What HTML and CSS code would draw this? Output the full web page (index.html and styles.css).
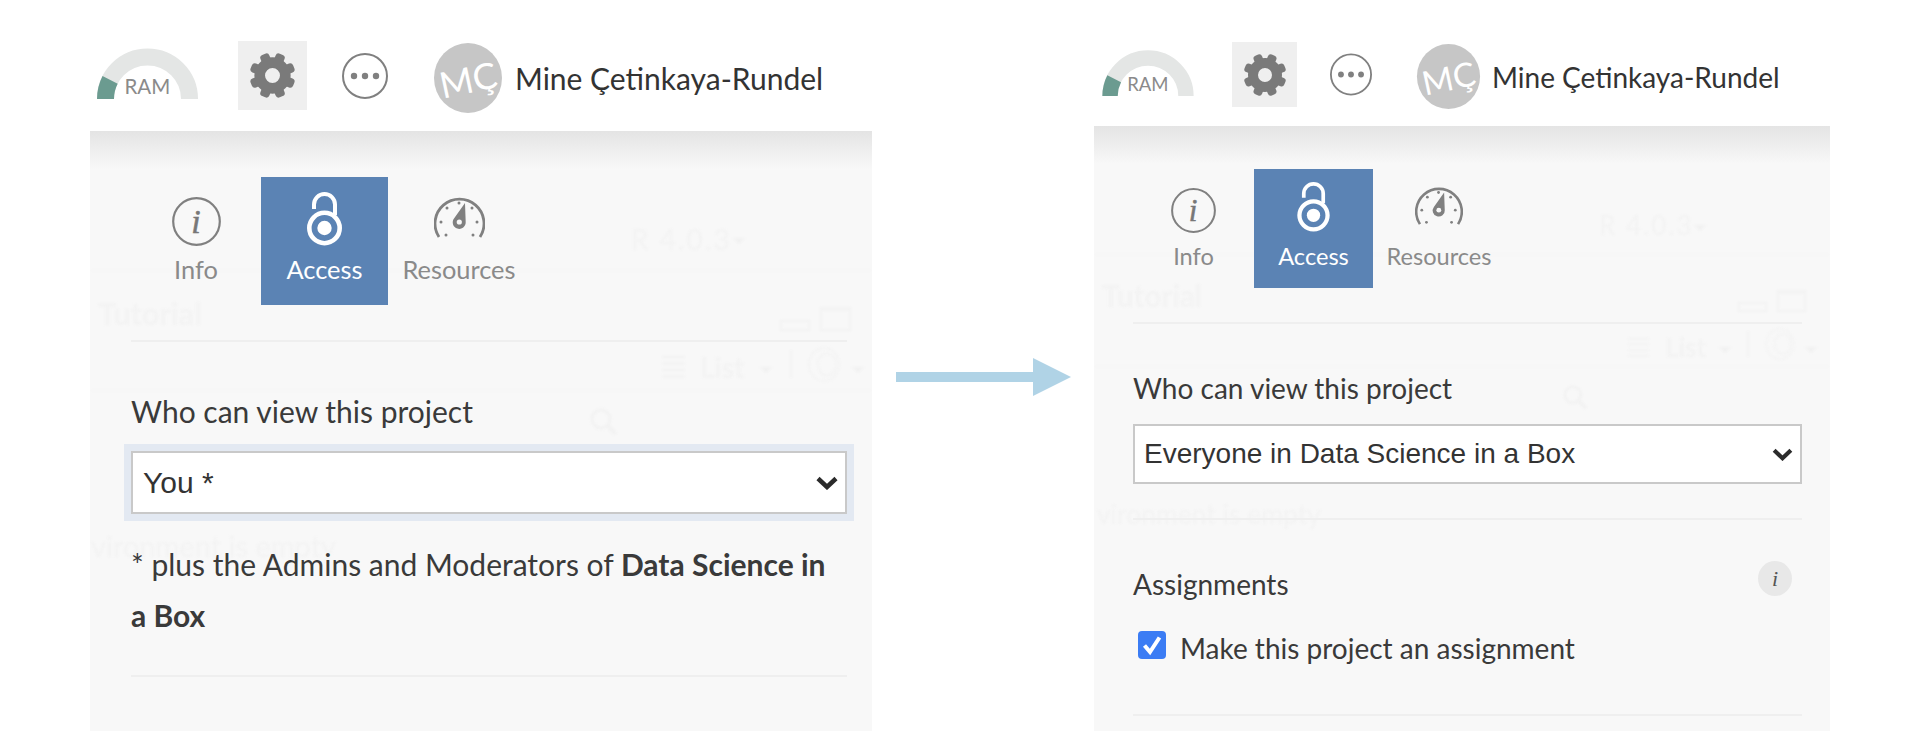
FILE: index.html
```html
<!DOCTYPE html>
<html lang="en">
<head>
<meta charset="utf-8">
<title>Project access settings</title>
<link rel="stylesheet" href="styles.css">
</head>
<body>
<svg class="defs" aria-hidden="true">
  <symbol id="i-ram" viewBox="0 0 101 52">
    <path d="M8.5 52A42 42 0 0 1 92.5 52" fill="none" stroke="#e4e6e5" stroke-width="17"/>
    <path d="M8.5 52A42 42 0 0 1 13.1 32.9" fill="none" stroke="#6b9b90" stroke-width="17"/>
    <text x="27.500" y="47" font-family="Lato" font-size="20.500" fill="#8a8a8a">RAM</text>
  </symbol>
  <symbol id="i-gear" viewBox="0 0 44 44">
    <g fill="#7a7a7a">
      <rect x="17.5" y="0.5" width="9" height="10" rx="3" transform="rotate(22.5 22 22)"/>
      <rect x="17.5" y="0.5" width="9" height="10" rx="3" transform="rotate(67.5 22 22)"/>
      <rect x="17.5" y="0.5" width="9" height="10" rx="3" transform="rotate(112.5 22 22)"/>
      <rect x="17.5" y="0.5" width="9" height="10" rx="3" transform="rotate(157.5 22 22)"/>
      <rect x="17.5" y="0.5" width="9" height="10" rx="3" transform="rotate(202.5 22 22)"/>
      <rect x="17.5" y="0.5" width="9" height="10" rx="3" transform="rotate(247.5 22 22)"/>
      <rect x="17.5" y="0.5" width="9" height="10" rx="3" transform="rotate(292.5 22 22)"/>
      <rect x="17.5" y="0.5" width="9" height="10" rx="3" transform="rotate(337.5 22 22)"/>
    </g>
    <circle cx="22" cy="22" r="12" fill="none" stroke="#7a7a7a" stroke-width="10"/>
  </symbol>
  <symbol id="i-more" viewBox="0 0 46 46">
    <circle cx="23" cy="23" r="22" fill="none" stroke="#808080" stroke-width="2"/>
    <circle cx="12" cy="23" r="3.2" fill="#808080"/>
    <circle cx="23" cy="23" r="3.2" fill="#808080"/>
    <circle cx="34" cy="23" r="3.2" fill="#808080"/>
  </symbol>
  <symbol id="i-avatar" viewBox="0 0 68 70">
    <ellipse cx="34" cy="35" rx="34" ry="35" fill="#c6c6c6"/>
    <text x="5" y="50" transform="rotate(-12 34 35)" font-family="Lato" font-weight="400" font-size="36" fill="#fff">MÇ</text>
  </symbol>
  <symbol id="i-info" viewBox="0 0 49 49">
    <circle cx="24.5" cy="24.5" r="23.3" fill="none" stroke="#808080" stroke-width="2.2"/>
    <text x="24" y="36" text-anchor="middle" font-family="Liberation Serif" font-style="italic" font-size="34" fill="#777" stroke="#777" stroke-width="0.5">i</text>
  </symbol>
  <symbol id="i-lock" viewBox="0 0 35 54">
    <path d="M7 17V12.5A10.5 10.5 0 0 1 28 12.5V23" fill="none" stroke="#fff" stroke-width="4"/>
    <circle cx="17.5" cy="36" r="15.2" fill="none" stroke="#fff" stroke-width="4.6"/>
    <circle cx="17.5" cy="36" r="7.2" fill="#fff"/>
  </symbol>
  <symbol id="i-speed" viewBox="0 0 51 43">
    <path d="M5 41A24.5 24.5 0 1 1 46 41" fill="none" stroke="#808080" stroke-width="2.8"/>
    <g fill="#808080">
      <circle cx="25" cy="7" r="1.5"/><circle cx="38" cy="12" r="1.5"/><circle cx="43" cy="26" r="1.5"/>
      <circle cx="39" cy="39" r="1.5"/><circle cx="12" cy="39" r="1.5"/><circle cx="7" cy="26" r="1.5"/><circle cx="13" cy="12" r="1.5"/>
      <path d="M31 7L31.7 26A6.5 6.5 0 1 1 20 22.5Z"/>
    </g>
    <circle cx="25.3" cy="26" r="2.6" fill="#f8f8f8"/>
  </symbol>
  <symbol id="i-chevron" viewBox="0 0 22 14">
    <path d="M2 2.500L11 11L20 2.500" fill="none" stroke="#2b2b2b" stroke-width="4.500"/>
  </symbol>
  <symbol id="i-lines" viewBox="0 0 23 23">
    <path d="M0 2H23M0 8.500H23M0 15H23M0 21.500H23" stroke="#f2f2f2" stroke-width="2"/>
  </symbol>
  <symbol id="i-r" viewBox="0 0 32 35">
    <ellipse cx="16" cy="17.500" rx="15" ry="16.500" fill="none" stroke="#f4f4f4" stroke-width="2"/>
    <ellipse cx="19" cy="17.500" rx="9" ry="11" fill="none" stroke="#f4f4f4" stroke-width="2"/>
  </symbol>
  <symbol id="i-search" viewBox="0 0 27 27">
    <circle cx="11" cy="11" r="9" fill="none" stroke="#f2f2f2" stroke-width="3"/>
    <path d="M17 17L26 26" stroke="#f2f2f2" stroke-width="4"/>
  </symbol>
</svg>

<main class="stage">
  <section class="fig fig-a">
    <header class="top">
      <svg class="ram"><use href="#i-ram"/></svg>
      <div class="gear-tile"><svg class="gear"><use href="#i-gear"/></svg></div>
      <svg class="more"><use href="#i-more"/></svg>
      <svg class="avatar"><use href="#i-avatar"/></svg>
      <span class="name">Mine Çetinkaya-Rundel</span>
    </header>
    <div class="panel">
      <div class="ghost" aria-hidden="true">
        <span class="g-text g-rver">R 4.0.3</span><i class="g-caret g-c1"></i>
        <span class="g-text g-tut">Tutorial</span>
        <i class="g-box"></i><i class="g-min"></i>
        <svg class="g-lines"><use href="#i-lines"/></svg>
        <span class="g-text g-list">List</span><i class="g-caret g-c2"></i>
        <i class="g-div"></i>
        <svg class="g-r"><use href="#i-r"/></svg><i class="g-caret g-c3"></i>
        <svg class="g-search"><use href="#i-search"/></svg>
        <span class="g-text g-env">vironment is empty</span>
        <i class="g-band g-b1"></i><i class="g-band g-b2"></i>
      </div>
      <nav class="tabs">
        <div class="tab tab-info"><svg class="ic-info"><use href="#i-info"/></svg><span class="tab-label">Info</span></div>
        <div class="tab tab-access"><svg class="ic-lock"><use href="#i-lock"/></svg><span class="tab-label">Access</span></div>
        <div class="tab tab-res"><svg class="ic-speed"><use href="#i-speed"/></svg><span class="tab-label">Resources</span></div>
      </nav>
      <hr class="rule rule-1">
      <div class="field-label">Who can view this project</div>
      <div class="select focused"><span>You *</span><svg class="chev"><use href="#i-chevron"/></svg></div>
      <p class="note">* plus the Admins and Moderators of <b>Data Science in a Box</b></p>
      <hr class="rule rule-2">
    </div>
  </section>

  <svg class="arrow" viewBox="0 0 175 38" aria-hidden="true"><path d="M0 14H137V0L175 19L137 38V24H0Z" fill="#b0d3e6"/></svg>

  <section class="fig fig-b">
    <header class="top">
      <svg class="ram"><use href="#i-ram"/></svg>
      <div class="gear-tile"><svg class="gear"><use href="#i-gear"/></svg></div>
      <svg class="more"><use href="#i-more"/></svg>
      <svg class="avatar"><use href="#i-avatar"/></svg>
      <span class="name">Mine Çetinkaya-Rundel</span>
    </header>
    <div class="panel">
      <div class="ghost" aria-hidden="true">
        <span class="g-text g-rver">R 4.0.3</span><i class="g-caret g-c1"></i>
        <span class="g-text g-tut">Tutorial</span>
        <i class="g-box"></i><i class="g-min"></i>
        <svg class="g-lines"><use href="#i-lines"/></svg>
        <span class="g-text g-list">List</span><i class="g-caret g-c2"></i>
        <i class="g-div"></i>
        <svg class="g-r"><use href="#i-r"/></svg><i class="g-caret g-c3"></i>
        <svg class="g-search"><use href="#i-search"/></svg>
        <span class="g-text g-env">vironment is empty</span>
        <i class="g-band g-b1"></i><i class="g-band g-b2"></i>
      </div>
      <nav class="tabs">
        <div class="tab tab-info"><svg class="ic-info"><use href="#i-info"/></svg><span class="tab-label">Info</span></div>
        <div class="tab tab-access"><svg class="ic-lock"><use href="#i-lock"/></svg><span class="tab-label">Access</span></div>
        <div class="tab tab-res"><svg class="ic-speed"><use href="#i-speed"/></svg><span class="tab-label">Resources</span></div>
      </nav>
      <hr class="rule rule-1">
      <div class="field-label">Who can view this project</div>
      <div class="select"><span>Everyone in Data Science in a Box</span><svg class="chev"><use href="#i-chevron"/></svg></div>
      <hr class="rule rule-2">
      <div class="assign-head">
        <span class="field-label">Assignments</span>
        <span class="info-dot">i</span>
      </div>
      <div class="check-row">
        <svg class="check" viewBox="0 0 28 28"><rect width="28" height="28" rx="4" fill="#3b7cf4"/><path d="M6.500 14.500L12 21L21.500 6.500" fill="none" stroke="#fff" stroke-width="4"/></svg>
        <span class="check-text">Make this project an assignment</span>
      </div>
      <hr class="rule rule-3">
    </div>
  </section>
</main>
</body>
</html>
```

FILE: styles.css
```css
* { box-sizing: border-box; }
html, body { margin: 0; padding: 0; background: #fff; }
body { width: 1920px; height: 756px; overflow: hidden; font-family: Lato, "Liberation Sans", sans-serif; color: #3a3a3a; }
.defs { display: none; }
.stage { display: flex; align-items: flex-start; height: 756px; padding-left: 90px; }
.fig { flex: none; }
.fig-a { width: 782px; padding-top: 41px; }
.fig-b { width: 736px; padding-top: 42px; margin-left: 23px; }
.arrow { flex: none; width: 175px; height: 38px; margin: 358px 0 0 24px; }

/* top bar */
.top { display: flex; align-items: flex-start; }
.gear-tile { display: flex; align-items: center; justify-content: center; background: #efefef; }
.name { color: #333; white-space: nowrap; }
.ram, .gear, .more, .avatar { display: block; flex: none; }

.fig-a .top { height: 69px; margin-bottom: 21px; padding-left: 7px; }
.fig-a .ram { width: 101px; height: 52px; margin-top: 6px; }
.fig-a .gear-tile { width: 69px; height: 69px; margin-left: 40px; }
.fig-a .gear { width: 47px; height: 47px; }
.fig-a .more { width: 46px; height: 46px; margin: 12px 0 0 35px; }
.fig-a .avatar { width: 68px; height: 70px; margin: 2px 0 0 46px; }
.fig-a .name { font-size: 30px; line-height: 40px; margin: 17px 0 0 13px; }

.fig-b .top { height: 65px; margin-bottom: 19px; padding-left: 6px; }
.fig-b .ram { width: 96px; height: 47px; margin-top: 7px; }
.fig-b .gear-tile { width: 65px; height: 65px; margin-left: 36px; }
.fig-b .gear { width: 44px; height: 44px; }
.fig-b .more { width: 42px; height: 43px; margin: 11px 0 0 33px; }
.fig-b .avatar { width: 65px; height: 65px; margin: 2px 0 0 44px; }
.fig-b .name { font-size: 28px; line-height: 36px; margin: 17px 0 0 11px; }

/* panel */
.panel { position: relative; overflow: hidden; background: linear-gradient(#e4e4e4, #f8f8f8 38px); }
.fig-a .panel { height: 600px; padding: 46px 25px 0 41px; }
.fig-b .panel { height: 605px; padding: 43px 28px 0 39px; }
.tabs, .rule, .field-label, .select, .note, .assign-head, .check-row { position: relative; }

/* tabs */
.tabs { display: flex; }
.tab { display: flex; flex-direction: column; align-items: center; justify-content: space-between; color: #8a8a8a; }
.tab-access { background: #5b83b4; color: #fff; }
.tab svg { display: block; flex: none; }
.tab-label { white-space: nowrap; }

.fig-a .tab { height: 128px; padding-bottom: 21px; }
.fig-a .tab-label { font-size: 25.4px; line-height: 30px; }
.fig-a .tab-info { width: 130px; padding-top: 20px; }
.fig-a .tab-access { width: 127px; padding-top: 15px; }
.fig-a .tab-res { width: 142px; padding-top: 19px; }
.fig-a .ic-info { width: 49px; height: 49px; }
.fig-a .ic-lock { width: 35px; height: 54px; }
.fig-a .ic-speed { width: 51px; height: 43px; }

.fig-b .tab { height: 119px; padding-bottom: 18px; }
.fig-b .tab-label { font-size: 23.6px; line-height: 28px; }
.fig-b .tab-info { width: 121px; padding-top: 19px; }
.fig-b .tab-access { width: 119px; padding-top: 13px; }
.fig-b .tab-res { width: 132px; padding-top: 17px; }
.fig-b .ic-info { width: 45px; height: 45px; }
.fig-b .ic-lock { width: 33px; height: 50px; }
.fig-b .ic-speed { width: 48px; height: 40px; }

/* rules */
.rule { display: block; height: 2px; margin: 0; border: 0; background: #efefef; }
.fig-a .rule-1 { margin-top: 35px; }
.fig-a .rule-2 { margin-top: 34px; }
.fig-b .rule-1 { margin-top: 34px; }
.fig-b .rule-2 { margin-top: 34px; }
.fig-b .rule-3 { margin-top: 49px; }

/* form */
.fig-a .field-label { display: block; font-size: 30px; line-height: 36px; margin-top: 51px; }
.fig-b .field-label { display: block; font-size: 28px; line-height: 34px; margin-top: 47px; }
.select { display: flex; align-items: center; justify-content: space-between; background: #fff; border: 2px solid #c9c9c9; font-family: "Liberation Sans", Arial, sans-serif; color: #333; }
.select .chev { display: block; flex: none; }
.fig-a .select { height: 63px; margin-top: 22px; padding: 0 7px 0 10px; font-size: 30px; }
.fig-a .focused { box-shadow: 0 0 0 7px #e3e9f2; }
.fig-a .chev { width: 22px; height: 14px; }
.fig-b .select { height: 60px; margin-top: 19px; padding: 0 7px 0 9px; font-size: 28px; }
.fig-b .chev { width: 21px; height: 13px; }
.note { margin: 25px 0 0; font-size: 30px; line-height: 51px; }
.note b { font-weight: 700; }
.fig-b .assign-head { display: flex; justify-content: space-between; align-items: flex-start; margin-top: 47px; }
.fig-b .assign-head .field-label { margin-top: 0; }
.info-dot { width: 34px; height: 35px; margin: -6px 10px 0 0; border-radius: 50%; background: #e8e8e8; color: #555; font: italic 22px/35px "Liberation Serif", serif; text-align: center; }
.check-row { display: flex; align-items: flex-start; margin-top: 30px; padding-left: 5px; }
.check { display: block; flex: none; width: 28px; height: 28px; }
.check-text { margin-left: 14px; font-size: 28px; line-height: 34px; }

/* blurred page behind the modal */
.ghost { position: absolute; inset: 0; filter: blur(1px); }
.ghost > * { position: absolute; display: block; }
.g-text { color: #f3f3f3; white-space: nowrap; line-height: 1; }
.g-caret { width: 0; height: 0; border-left: 6px solid transparent; border-right: 6px solid transparent; border-top: 6px solid #f1f1f1; }
.g-box { border: 2px solid #f3f3f3; border-top-width: 4px; }
.g-min { border: 2px solid #f3f3f3; }
.g-div { width: 2px; background: #f4f4f4; }
.g-band { left: 0; right: 0; height: 1px; background: #f6f6f6; }

.fig-a .g-rver { left: 541px; top: 94px; font-size: 28px; letter-spacing: 2px; }
.fig-a .g-c1 { left: 643px; top: 107px; }
.fig-a .g-tut { left: 8px; top: 167px; font-size: 30.5px; font-weight: 700; }
.fig-a .g-box { left: 730px; top: 176px; width: 31px; height: 24px; }
.fig-a .g-min { left: 690px; top: 189px; width: 30px; height: 11px; }
.fig-a .g-lines { left: 572px; top: 224px; width: 23px; height: 23px; }
.fig-a .g-list { left: 610px; top: 222px; font-size: 28px; font-weight: 700; }
.fig-a .g-c2 { left: 670px; top: 236px; }
.fig-a .g-div { left: 700px; top: 219px; height: 28px; }
.fig-a .g-r { left: 718px; top: 216px; width: 32px; height: 35px; }
.fig-a .g-c3 { left: 762px; top: 236px; }
.fig-a .g-search { left: 500px; top: 277px; width: 27px; height: 27px; }
.fig-a .g-env { left: 1px; top: 400px; font-size: 29px; }
.fig-a .g-b1 { top: 139px; }
.fig-a .g-b2 { top: 259px; }

.fig-b .g-rver { left: 505px; top: 86px; font-size: 26px; letter-spacing: 2px; }
.fig-b .g-c1 { left: 600px; top: 99px; }
.fig-b .g-tut { left: 8px; top: 155px; font-size: 29.5px; font-weight: 700; }
.fig-b .g-box { left: 683px; top: 164px; width: 29px; height: 22px; }
.fig-b .g-min { left: 644px; top: 176px; width: 29px; height: 10px; }
.fig-b .g-lines { left: 533px; top: 211px; width: 23px; height: 20px; }
.fig-b .g-list { left: 571px; top: 208px; font-size: 26px; font-weight: 700; }
.fig-b .g-c2 { left: 625px; top: 221px; }
.fig-b .g-div { left: 653px; top: 205px; height: 26px; }
.fig-b .g-r { left: 671px; top: 202px; width: 30px; height: 32px; }
.fig-b .g-c3 { left: 711px; top: 221px; }
.fig-b .g-search { left: 468px; top: 259px; width: 26px; height: 24px; }
.fig-b .g-env { left: 3px; top: 375px; font-size: 26.5px; }
.fig-b .g-b1 { top: 128px; }
.fig-b .g-b2 { top: 240px; }
```
